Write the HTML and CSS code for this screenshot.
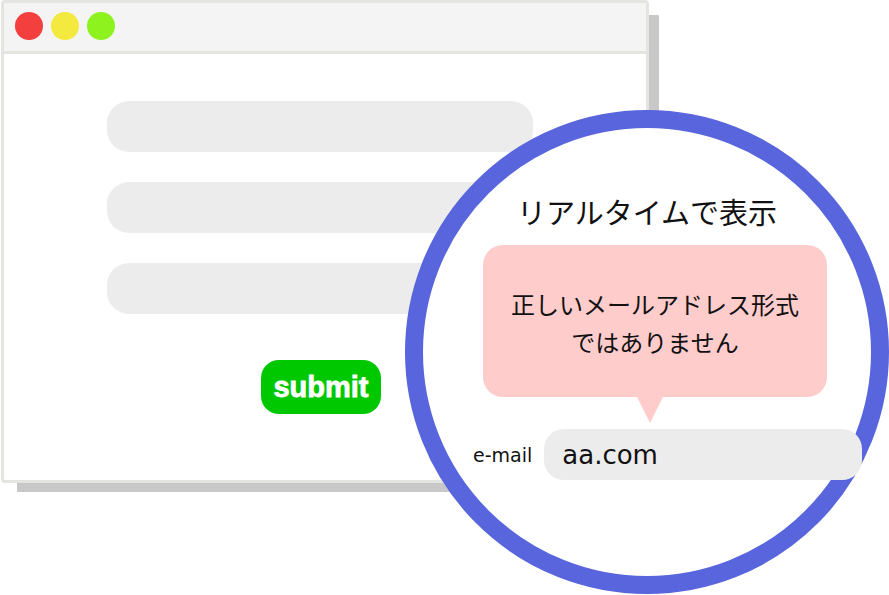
FILE: index.html
```html
<!DOCTYPE html>
<html lang="ja">
<head>
    <meta charset="UTF-8">
    <meta name="viewport" content="width=device-width, initial-scale=1.0">
    <title>リアルタイムで表示</title>
    <link rel="stylesheet" href="styles.css">
</head>
<body>
    <div class="stage">
        <div class="window">
            <div class="titlebar">
                <span class="dot dot-red"></span>
                <span class="dot dot-yellow"></span>
                <span class="dot dot-green"></span>
            </div>
            <div class="form">
                <div class="field"></div>
                <div class="field"></div>
                <div class="field"></div>
                <button class="submit">submit</button>
            </div>
        </div>

        <div class="lens">
            <p class="lens-title">リアルタイムで表示</p>
            <div class="balloon">正しいメールアドレス形式<br>ではありません</div>
            <div class="email-row">
                <span class="email-label">e-mail</span>
                <div class="email-input">aa.com</div>
            </div>
        </div>
    </div>
</body>
</html>
```

FILE: styles.css
```css
body {
    margin: 0;
    background: #fff;
    font-family: "Noto Sans CJK JP", sans-serif;
    color: #111;
}
.stage {
    position: relative;
    width: 889px;
    height: 595px;
    overflow: hidden;
}
.window {
    box-sizing: border-box;
    width: 648px;
    height: 483px;
    margin-left: 1px;
    border: 3px solid #e4e5e1;
    border-radius: 4px;
    background: #fff;
    box-shadow: 13px 12px 0 -3px #c8c8c8;
}
.titlebar {
    display: flex;
    align-items: center;
    gap: 8px;
    height: 46px;
    padding: 0 0 2px 11px;
    background: #f4f4f4;
    border-bottom: 3px solid #e4e5e1;
}
.dot {
    width: 28px;
    height: 28px;
    border-radius: 50%;
}
.dot-red {
    background-color: #f43f3f;
}
.dot-yellow {
    background-color: #f4e93e;
}
.dot-green {
    background-color: #8ef21f;
}
.form {
    display: flex;
    flex-direction: column;
    align-items: flex-start;
    padding: 47px 0 0 103px;
}
.field {
    width: 426px;
    height: 51px;
    margin-bottom: 30px;
    border-radius: 22px;
    background: #ececec;
}
.submit {
    width: 120px;
    height: 54px;
    margin: 16px 0 0 154px;
    padding: 0;
    border: none;
    border-radius: 18px;
    background: #00c800;
    color: #fff;
    font-family: "Liberation Sans", Arial, sans-serif;
    font-weight: bold;
    font-size: 29px;
    -webkit-text-stroke: 0.8px #fff;
}
.lens {
    position: absolute;
    left: 405px;
    top: 110px;
    box-sizing: border-box;
    width: 484px;
    height: 484px;
    padding-top: 65px;
    border: 18px solid #5865dc;
    border-radius: 50%;
    background: #fff;
    display: flex;
    flex-direction: column;
    align-items: flex-start;
}
.lens-title {
    width: 100%;
    margin: 0;
    font-size: 29px;
    line-height: 36px;
    text-align: center;
}
.balloon {
    position: relative;
    box-sizing: border-box;
    width: 344px;
    height: 152px;
    margin: 16px 0 0 60px;
    padding-top: 40px;
    border-radius: 20px;
    background: #ffcccc;
    font-size: 24px;
    line-height: 38px;
    text-align: center;
}
.balloon::after {
    content: "";
    position: absolute;
    top: 100%;
    left: 154px;
    border-left: 13px solid transparent;
    border-right: 13px solid transparent;
    border-top: 26px solid #ffcccc;
}
.email-row {
    display: flex;
    align-items: center;
    gap: 12px;
    margin: 32px 0 0 50px;
}
.email-label {
    font-family: "DejaVu Sans", sans-serif;
    font-size: 19px;
}
.email-input {
    box-sizing: border-box;
    display: flex;
    align-items: center;
    width: 318px;
    height: 51px;
    padding-left: 18px;
    border-radius: 20px;
    background: #ececec;
    font-family: "DejaVu Sans", sans-serif;
    font-size: 26px;
}
```
